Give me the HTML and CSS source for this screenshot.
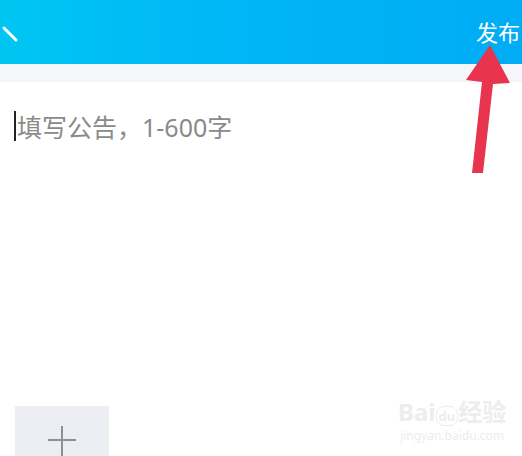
FILE: index.html
```html
<!DOCTYPE html>
<html lang="zh">
<head>
  <meta charset="UTF-8">
  <title>发布公告</title>
  <link rel="stylesheet" href="styles.css">
</head>
<body>
  <div class="header">
    <svg class="back" width="20" height="20" viewBox="0 0 20 20"><path d="M3 4 L15 16" stroke="#fff" stroke-width="3" stroke-linecap="round" fill="none"/></svg>
    <span class="publish">发布</span>
  </div>
  <div class="strip"></div>
  <div class="editor">
    <span class="cursor"></span><span class="placeholder">填写公告，1-600字</span>
  </div>
  <div class="add-box">
    <svg width="30" height="30" viewBox="0 0 30 30"><path d="M1 14 H29 M15 0 V30" stroke="#8d8f94" stroke-width="2" fill="none"/></svg>
  </div>

  <svg class="pointer" width="60" height="140" viewBox="0 0 60 140">
    <polygon points="30,5 50,43 33,44 23,133 12,133 22,42 6,40" fill="#e8344c"/>
  </svg>

  <div class="watermark">
    <div class="wm-top">Bai<span class="du">du</span>经验</div>
    <div class="wm-url">jingyan.baidu.com</div>
  </div>
</body>
</html>
```
FILE: styles.css
```css
body {
  margin: 0;
  width: 522px;
  height: 456px;
  overflow: hidden;
  background: #fff;
  font-family: 'Noto Sans', 'Noto Sans CJK SC', sans-serif;
  position: relative;
}
.header {
  height: 64px;
  background: linear-gradient(90deg, #00c6f2 0%, #00b7f6 40%, #00acf5 100%);
  display: flex;
  align-items: center;
  justify-content: space-between;
  padding-right: 2px;
}
.back {
  margin-left: 1px;
  margin-top: 4px;
}
.publish {
  color: #fff;
  font-size: 22px;
  margin-top: -2px;
}
.strip {
  height: 18px;
  background: #f5f6fa;
}
.editor {
  display: flex;
  align-items: center;
  padding: 26px 0 0 14px;
}
.cursor {
  width: 2px;
  height: 30px;
  background: #222;
}
.placeholder {
  color: #8a8a8a;
  font-size: 25px;
  margin-left: 1px;
}
.add-box {
  position: absolute;
  left: 15px;
  top: 406px;
  width: 94px;
  height: 60px;
  background: #eceef3;
  display: flex;
  justify-content: center;
  align-items: flex-start;
  padding-top: 20px;
  box-sizing: border-box;
}
.pointer {
  position: absolute;
  left: 460px;
  top: 40px;
}
.watermark {
  position: absolute;
  left: 398px;
  top: 400px;
  color: #ededed;
  text-align: center;
}
.wm-top {
  font-size: 24px;
  font-weight: bold;
  line-height: 1;
}
.du {
  font-size: 13px;
  border: 1px solid #ededed;
  border-radius: 8px;
  padding: 0 2px;
}
.wm-url {
  font-size: 12px;
  margin-top: 3px;
}
```
